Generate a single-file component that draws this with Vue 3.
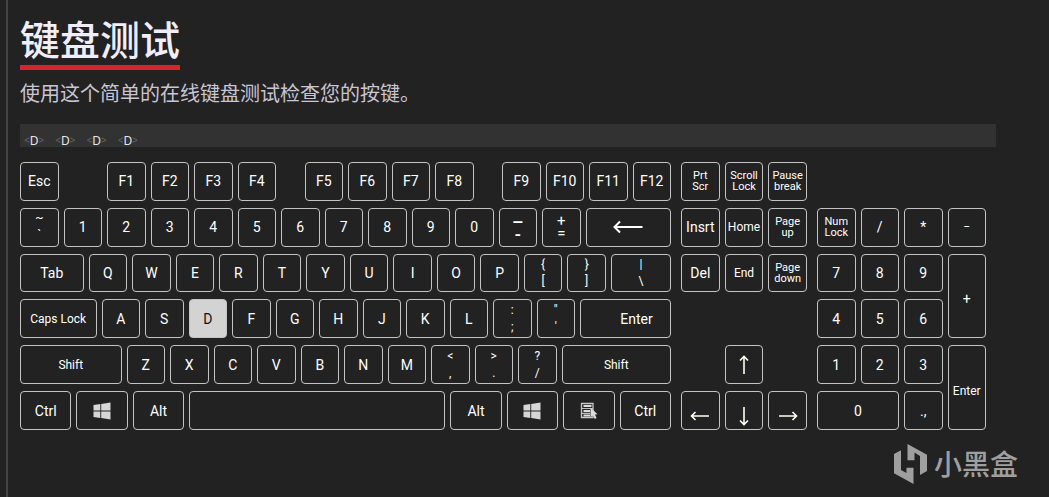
<script setup>
import { ref } from 'vue'

const pressed = ref('KeyD')
const history = ref(['D', 'D', 'D', 'D'])

// w is the relative width of a key inside its row
const k = (label, w = 77, extra = {}) => ({ label, w, id: 'Key' + label, ...extra })
const gap = (w) => ({ spacer: true, w })
const pair = (a, b, w = 77, kind = '') => ({ pair: [a, b], w, id: 'Pair' + b, kind })
const icon = (name, title, w = 77, id = title) => ({ icon: name, title, w, id })
const letters = (s) => s.split('').map((c) => k(c))

const mainRows = [
  [
    k('Esc'), gap(77),
    k('F1'), k('F2'), k('F3'), k('F4'), gap(37),
    k('F5'), k('F6'), k('F7'), k('F8'), gap(37),
    k('F9'), k('F10'), k('F11'), k('F12'),
  ],
  [
    pair('~', '`'), ...letters('1234567890'),
    pair('–', '-', 77, 'dense dash'), pair('+', '=', 77, 'dense'),
    icon('back', 'Backspace', 171),
  ],
  [k('Tab', 127), ...letters('QWERTYUIOP'), pair('{', '['), pair('}', ']'), pair('|', '\\', 120)],
  [
    k('Caps Lock', 153, { small: true }), ...letters('ASDFGHJKL'),
    pair(':', ';'), pair('"', "'"), k('Enter', 182, { inset: true }),
  ],
  [
    k('Shift', 203, { small: true }), ...letters('ZXCVBNM'),
    pair('<', ','), pair('>', '.'), pair('?', '/'),
    k('Shift', 219, { small: true, id: 'ShiftRight' }),
  ],
  [
    k('Ctrl', 103), icon('win', 'Windows', 103), k('Alt', 103),
    icon('space', 'Space', 513), k('Alt', 103, { id: 'AltRight' }),
    icon('win', 'Windows', 103, 'WindowsRight'), icon('menu', 'Menu', 103),
    k('Ctrl', 103, { id: 'CtrlRight' }),
  ],
]

const columns = (row) => row.map((key) => `minmax(0, ${key.w}fr)`).join(' ')

const navKeys = [
  k('Prt\nScr', 1, { tiny: true }), k('Scroll\nLock', 1, { tiny: true }), k('Pause\nbreak', 1, { tiny: true }),
  k('Insrt'), k('Home', 1, { small: true }), k('Page\nup', 1, { tiny: true }),
  k('Del'), k('End', 1, { small: true }), k('Page\ndown', 1, { tiny: true }),
  { ...icon('up', 'Up'), area: 'up' },
  { ...icon('left', 'Left'), area: 'left', low: true },
  { ...icon('down', 'Down'), area: 'down', low: true },
  { ...icon('right', 'Right'), area: 'right', low: true },
]

const pad = (label, area, extra = {}) => ({ label, area, id: 'Pad' + label, ...extra })
const padKeys = [
  pad('Num\nLock', 'num', { tiny: true }), pad('/', 'div'), pad('*', 'mul'), pad('−', 'sub', { small: true }),
  pad('7', 'n7'), pad('8', 'n8'), pad('9', 'n9'), pad('+', 'add'),
  pad('4', 'n4'), pad('5', 'n5'), pad('6', 'n6'),
  pad('1', 'n1'), pad('2', 'n2'), pad('3', 'n3'), pad('Enter', 'ent', { small: true }),
  pad('0', 'n0'), pad('.,', 'dot'),
]

const classes = (key) => [
  'key',
  key.area ? 'at-' + key.area : '',
  {
    pressed: key.id === pressed.value,
    small: key.small,
    tiny: key.tiny,
    inset: key.inset,
    low: key.low,
  },
]

function press(key) {
  pressed.value = key.id
  history.value.push(key.label || key.title || key.pair[1])
}
</script>

<template>
  <main class="page">
    <header class="intro">
      <h1>键盘测试</h1>
      <p>使用这个简单的在线键盘测试检查您的按键。</p>
    </header>

    <div class="history">
      <span v-for="(h, i) in history" :key="i" class="entry"><i>&lt;</i>{{ h }}<i>&gt;</i></span>
    </div>

    <section class="board">
      <div class="main-block">
        <div
          v-for="(row, r) in mainRows"
          :key="r"
          class="row"
          :style="{ gridTemplateColumns: columns(row) }"
        >
          <template v-for="(key, i) in row" :key="i">
            <span v-if="key.spacer"></span>
            <button
              v-else
              type="button"
              :class="classes(key)"
              :aria-label="key.title"
              @click="press(key)"
            >
              <span v-if="key.pair" class="pair" :class="key.kind">{{ key.pair.join('\n') }}</span>
              <svg v-else-if="key.icon === 'back'" width="30" height="14" viewBox="0 0 30 14">
                <path d="M29.500 7H2M7 1.500L1.500 7L7 12.500" fill="none" stroke="#fff" stroke-width="2" />
              </svg>
              <svg v-else-if="key.icon === 'win'" width="18" height="18" viewBox="0 0 18 18" fill="#d6d6d6">
                <path d="M0.500 3L7.300 2V8.600H0.500zM8.200 1.900L17.500 0.600V8.600H8.200zM0.500 9.400H7.300V16L0.500 15zM8.200 9.400H17.500V17.400L8.200 16.100z" />
              </svg>
              <svg v-else-if="key.icon === 'menu'" width="18" height="18" viewBox="0 0 18 18">
                <path d="M1.500 1.500H13V15.500H1.500z" fill="none" stroke="#c8c8c8" stroke-width="1.300" />
                <path d="M3.500 4H11.500M3.500 9H10M3.500 13.500H10" stroke="#dcdcdc" stroke-width="1.800" />
                <path d="M2 6.500H13M2 11.300H10" stroke="#bdbdbd" stroke-width="1.200" />
                <path d="M10.500 5.500L17.500 12.200L15 12.400L16.500 16L14.800 16.900L13 13.400L10.500 15.200z" fill="#dcdcdc" />
              </svg>
              <template v-else-if="key.label">{{ key.label }}</template>
            </button>
          </template>
        </div>
      </div>

      <div class="nav-block">
        <button
          v-for="key in navKeys"
          :key="key.id"
          type="button"
          :class="classes(key)"
          :aria-label="key.title"
          @click="press(key)"
        >
          <svg
            v-if="key.icon"
            :class="'arrow-' + key.icon"
            width="20"
            height="20"
            viewBox="0 0 20 20"
            fill="none"
            stroke="#fffff0"
            stroke-width="1.600"
          >
            <path d="M19 10H1.500M5.500 6L1.500 10L5.500 14" />
          </svg>
          <template v-else>{{ key.label }}</template>
        </button>
      </div>

      <div class="pad-block">
        <button
          v-for="key in padKeys"
          :key="key.id"
          type="button"
          :class="classes(key)"
          @click="press(key)"
        >{{ key.label }}</button>
      </div>
    </section>

    <footer class="brand">
      <svg width="34" height="40" viewBox="0 0 34 40" fill="#9f9f9f">
        <path d="M0 10L7 6.300V26L12.500 29V23.700H19.500V40L0 29.300z" />
        <path d="M13.500 0L33 10.700V27L26 31V12L20.500 8.500V16.300H13.500z" />
      </svg>
      <span>小黑盒</span>
    </footer>
  </main>
</template>

<style>
body {
  margin: 0;
  background: #222;
}
</style>

<style scoped>
.page {
  box-sizing: border-box;
  min-height: 100vh;
  margin-left: 6px;
  border-left: 2px solid #444;
  background: #222;
  color: #fff;
  font-family: Roboto, "Noto Sans CJK SC", sans-serif;
}

.intro {
  padding: 16px 53px 0 12px;
}

h1 {
  width: fit-content;
  margin: 0;
  padding-bottom: 5px;
  border-bottom: 5px solid #d32626;
  color: #f0eefa;
  font: 500 40px/44px "Noto Sans CJK SC", sans-serif;
}

p {
  margin: 7px 0 0;
  color: #c9c5d3;
  font: 400 20px/32px "Noto Sans CJK SC", sans-serif;
}

.history {
  display: flex;
  flex-wrap: wrap;
  gap: 11px;
  margin: 15px 53px 0 12px;
  padding: 10px 4px 0;
  background: #323232;
  color: #e6e6e6;
  font: 12px/13px "Noto Sans", sans-serif;
}

.entry {
  display: flex;
}

.entry i {
  color: #666;
  font-size: 10px;
  font-style: normal;
}

.board {
  display: grid;
  grid-template-columns: 651fr 126fr 169fr;
  gap: 10px;
  height: 268px;
  margin: 15px 63px 0 12px;
}

.main-block {
  display: grid;
  grid-template-rows: repeat(6, 1fr);
  gap: 7px;
}

.row {
  display: grid;
  gap: 5px;
  min-width: 0;
}

.nav-block,
.pad-block {
  display: grid;
  grid-template-rows: repeat(6, 1fr);
  gap: 7px 5px;
}

.nav-block {
  grid-template-columns: repeat(3, 1fr);
}

.pad-block {
  grid-template-columns: repeat(4, 1fr);
  grid-template-areas:
    ". . . ."
    "num div mul sub"
    "n7 n8 n9 add"
    "n4 n5 n6 add"
    "n1 n2 n3 ent"
    "n0 n0 dot ent";
}

.key {
  display: flex;
  align-items: center;
  justify-content: center;
  box-sizing: border-box;
  min-width: 0;
  margin: 0;
  padding: 0;
  border: 1px solid #c4c4c4;
  border-radius: 4px;
  background: #222;
  color: #fff;
  font: 400 14px/16px Roboto, sans-serif;
  text-align: center;
  white-space: pre-line;
  cursor: pointer;
}

.pressed {
  background: #d3d3d3;
  color: #111;
}

.small {
  font-size: 12px;
}

.tiny {
  font-size: 11px;
  line-height: 11px;
}

.inset {
  padding-left: 22px;
}

.low {
  padding-top: 10px;
}

.pair {
  font-size: 12px;
  line-height: 17px;
}

.dense {
  font-size: 15px;
  line-height: 12px;
}

.dash {
  padding-top: 4px;
  font-size: 18px;
  font-weight: 500;
}

.arrow-up {
  transform: rotate(90deg);
}

.arrow-right {
  transform: rotate(180deg);
}

.arrow-down {
  transform: rotate(270deg);
}

.at-up { grid-area: 5 / 2; }
.at-left { grid-area: 6 / 1; }
.at-down { grid-area: 6 / 2; }
.at-right { grid-area: 6 / 3; }

.at-num { grid-area: num; }
.at-div { grid-area: div; }
.at-mul { grid-area: mul; }
.at-sub { grid-area: sub; }
.at-add { grid-area: add; }
.at-ent { grid-area: ent; }
.at-dot { grid-area: dot; }
.at-n0 { grid-area: n0; }
.at-n1 { grid-area: n1; }
.at-n2 { grid-area: n2; }
.at-n3 { grid-area: n3; }
.at-n4 { grid-area: n4; }
.at-n5 { grid-area: n5; }
.at-n6 { grid-area: n6; }
.at-n7 { grid-area: n7; }
.at-n8 { grid-area: n8; }
.at-n9 { grid-area: n9; }

.at-add,
.at-ent {
  padding-top: 6px;
}

.brand {
  display: flex;
  gap: 6px;
  justify-content: flex-end;
  padding: 14px 31px 0 0;
  color: #9f9f9f;
  font: 500 28px/38px "Noto Sans CJK SC", sans-serif;
}
</style>
